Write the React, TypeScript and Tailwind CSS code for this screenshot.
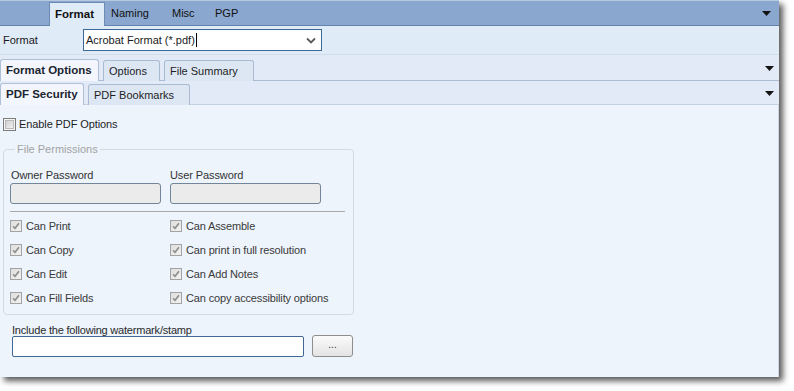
import React from 'react';

const font = "font-['Liberation_Sans',Arial,sans-serif]";

const Arrow = () => (
  <svg width="9" height="5" viewBox="0 0 9 5" className="block">
    <path d="M0 0h9L4.5 5z" fill="#141414" />
  </svg>
);

const CheckBox: React.FC<{ checked?: boolean }> = ({ checked }) =>
  checked ? (
    <span className="flex w-[12px] h-[12px] shrink-0 items-center justify-center border border-[#a3a3a3] bg-gradient-to-br from-[#dedede] to-[#f2f2f2]">
      <svg width="8" height="8" viewBox="0 0 8 8">
        <path d="M1 4.2l2 2L7 1.2" stroke="#8c8c8c" strokeWidth="1.6" fill="none" />
      </svg>
    </span>
  ) : (
    <span className="flex w-[13px] h-[13px] shrink-0 items-center justify-center border border-[#7c7c7c] bg-[#f5f5f5]">
      <span className="block w-[9px] h-[9px] border border-[#b9b9b9] bg-gradient-to-br from-[#d2d2d2] to-[#efefef]" />
    </span>
  );

const Perm: React.FC<{ label: string }> = ({ label }) => (
  <div className="flex h-[24px] items-center gap-[4px]">
    <CheckBox checked />
    <span className="text-[11px] text-[#3a3a3a] tracking-[-0.15px]">{label}</span>
  </div>
);

const SubTab: React.FC<{ label: string; active?: boolean; w: string }> = ({ label, active, w }) => (
  <div
    className={`${w} -mb-px flex items-center pl-[5px] rounded-t-[3px] border border-b-0 ${
      active
        ? 'h-[22px] bg-[#f3f7fd] border-[#aebfd6] font-bold text-[11.5px] text-[#1b2430]'
        : 'h-[21px] bg-[#dde7f4] border-[#a9bbd3] text-[11px] text-[#1e1e1e] border-b'
    }`}
  >
    {label}
  </div>
);

export default function App() {
  return (
    <div className={`w-[794px] h-[391px] bg-white ${font}`}>
      <div className="w-[779px] h-[377px] flex flex-col shadow-[4px_4px_6px_rgba(0,0,0,0.65)] bg-[#edf4fc]">
        {/* main tabs */}
        <div className="h-[26px] flex items-end bg-[#89a7cf] border-t border-t-[#b7c9e1] border-b border-b-[#6283ae] pl-[49px] pr-[8px]">
          <div className="-mb-px h-[24px] w-[56px] flex items-center pl-[5px] bg-[#e0ebf8] border border-b-0 border-[#6e8bb3] font-bold text-[11.5px] text-[#111]">
            Format
          </div>
          <div className="h-[24px] w-[61px] flex items-center pl-[6px] text-[11px] text-[#111]">Naming</div>
          <div className="h-[24px] w-[43px] flex items-center pl-[6px] text-[11px] text-[#111]">Misc</div>
          <div className="h-[24px] flex items-center pl-[6px] text-[11px] text-[#111]">PGP</div>
          <div className="ml-auto self-center mt-[1px]">
            <Arrow />
          </div>
        </div>

        {/* format row */}
        <div className="h-[29px] flex items-center bg-[#e0ebf8] pl-[3px] border-b border-[#d2ddeb]">
          <span className="w-[80px] text-[11px] text-[#1a1a1a]">Format</span>
          <div className="w-[239px] h-[22px] flex items-center border border-[#3c6897] bg-white pl-[2px] pr-[5px]">
            <span className="text-[11px] text-[#1a1a1a]">Acrobat Format (*.pdf)</span>
            <span className="ml-[1px] w-px h-[14px] bg-black" />
            <svg width="10" height="7" viewBox="0 0 10 7" className="ml-auto">
              <path d="M1 1.5l4 4 4-4" stroke="#5a5a5a" strokeWidth="1.8" fill="none" />
            </svg>
          </div>
        </div>

        {/* format options tabs */}
        <div className="h-[26px] flex items-end gap-[4px] bg-[#e1eaf6] border-b border-[#aabcd4] pr-[5px]">
          <SubTab label="Format Options" active w="w-[99px]" />
          <SubTab label="Options" w="w-[57px]" />
          <SubTab label="File Summary" w="w-[90px]" />
          <div className="ml-auto self-center mt-[2px]">
            <Arrow />
          </div>
        </div>

        {/* pdf tabs */}
        <div className="h-[24px] flex items-end gap-[4px] bg-[#e1eaf6] border-b border-[#c3d1e3] pr-[5px]">
          <SubTab label="PDF Security" active w="w-[84px]" />
          <SubTab label="PDF Bookmarks" w="w-[102px]" />
          <div className="ml-auto self-center mt-[1px]">
            <Arrow />
          </div>
        </div>

        {/* content */}
        <div className="flex-1 flex flex-col pl-[3px] border-r border-[#c9d6e6]">
          <div className="mt-[13px] h-[13px] flex items-center gap-[3px]">
            <CheckBox />
            <span className="text-[11px] text-[#1e1e1e] tracking-[-0.1px]">Enable PDF Options</span>
          </div>

          <fieldset className="mt-[12px] w-[351px] border border-[#d3dae3] rounded-[4px] px-[6px] pb-[4px]">
            <legend className="ml-[5px] px-[2px] text-[11px] leading-[13px] text-[#a3a3a3]">File Permissions</legend>
            <div className="flex gap-[9px] mt-[13px]">
              <div className="w-[151px] flex flex-col">
                <span className="pl-[1px] text-[11px] leading-[13px] text-[#333] tracking-[-0.1px]">Owner Password</span>
                <div className="mt-[1px] h-[21px] bg-[#ebebeb] border border-[#73859a] rounded-[3px]" />
              </div>
              <div className="w-[151px] flex flex-col">
                <span className="text-[11px] leading-[13px] text-[#333] tracking-[-0.1px]">User Password</span>
                <div className="mt-[1px] h-[21px] bg-[#ebebeb] border border-[#73859a] rounded-[3px]" />
              </div>
            </div>
            <div className="mt-[7px] w-[335px] h-px bg-[#a9a9a9]" />
            <div className="mt-[2px] grid grid-cols-[160px_1fr]">
              <Perm label="Can Print" />
              <Perm label="Can Assemble" />
              <Perm label="Can Copy" />
              <Perm label="Can print in full resolution" />
              <Perm label="Can Edit" />
              <Perm label="Can Add Notes" />
              <Perm label="Can Fill Fields" />
              <Perm label="Can copy accessibility options" />
            </div>
          </fieldset>

          <div className="pl-[9px] mt-[9px] flex flex-col">
            <span className="text-[11px] leading-[12px] text-[#2a2a2a] tracking-[-0.2px]">Include the following watermark/stamp</span>
            <div className="flex items-center gap-[8px]">
              <div className="w-[292px] h-[21px] bg-white border border-[#3f6896] rounded-[2px]" />
              <button className="w-[41px] h-[22px] -mt-[1px] rounded-[3px] border border-[#8e8e8e] bg-gradient-to-b from-[#fbfbfb] to-[#e3e3e3] text-[10px] text-[#333] leading-none pb-[2px]">
                ...
              </button>
            </div>
          </div>
        </div>
      </div>
    </div>
  );
}
